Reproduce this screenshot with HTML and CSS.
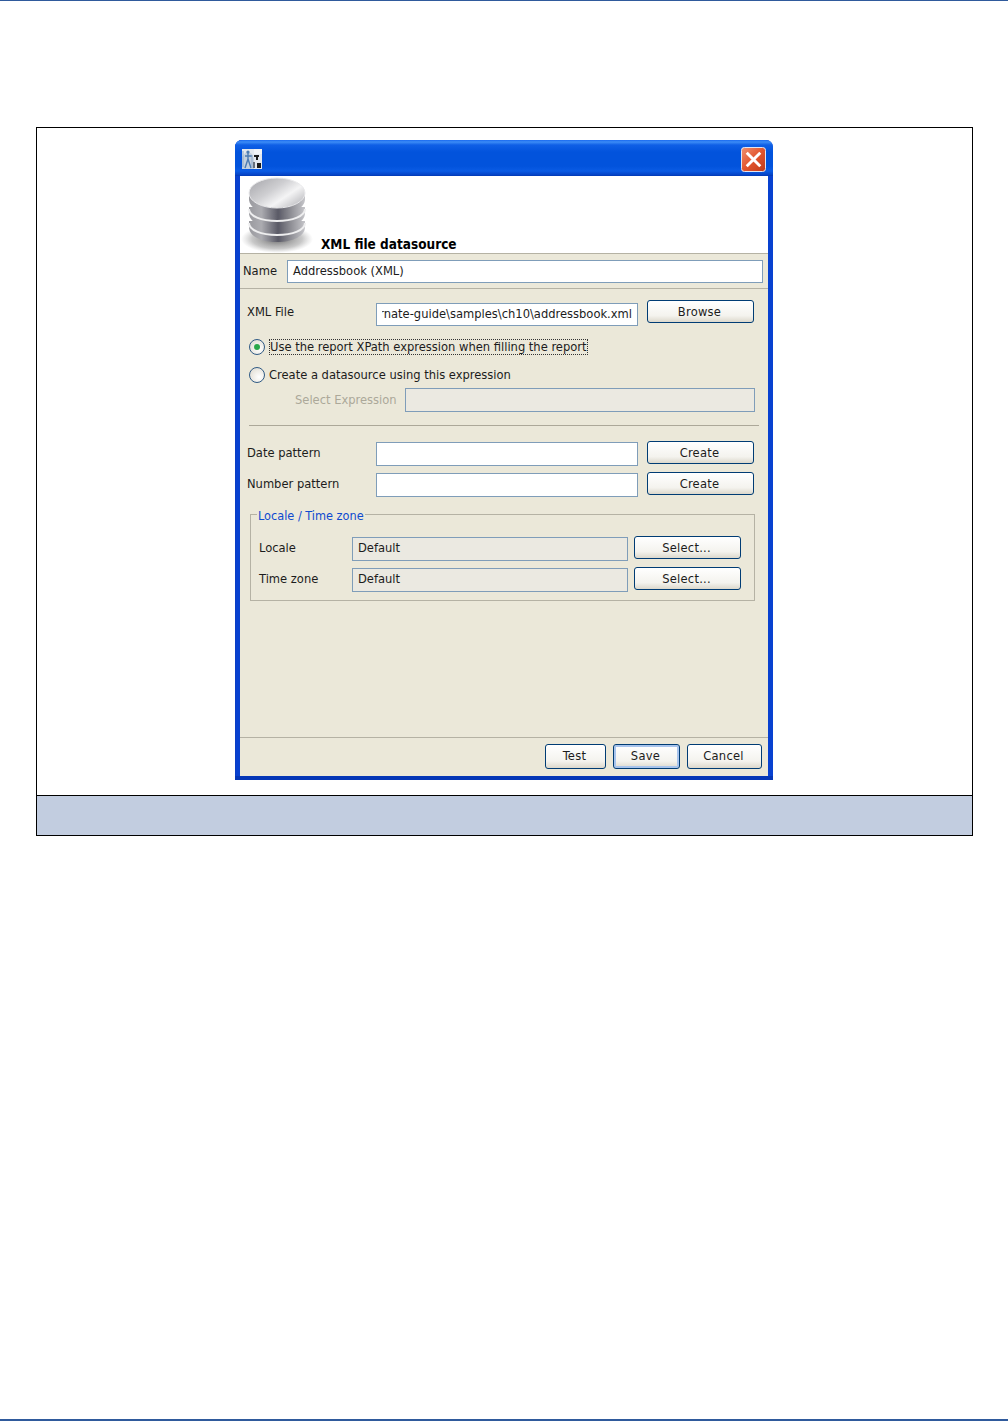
FILE: index.html
```html
<!DOCTYPE html>
<html lang="en">
<head>
<meta charset="utf-8">
<title>XML file datasource</title>
<link rel="stylesheet" href="styles.css">
</head>
<body>
<div class="page">
  <div class="rule-top"></div>
  <div class="figure">
    <div class="figure-shot">
      <div class="window">
        <div class="titlebar">
          <svg class="app-icon" width="20" height="20" viewBox="0 0 20 20">
            <defs><filter id="soft"><feGaussianBlur stdDeviation="0.350"/></filter></defs>
            <g filter="url(#soft)">
              <rect width="20" height="20" fill="#e3e8ee"/>
              <path d="M0 8l5-6 5 3 2 5v10H0z" fill="#c3d0df"/>
              <path d="M12 0h8v5h-8z" fill="#f1f3f6"/>
              <path d="M6 3v7M6 10l-3 9M6 10l3 9M3 7h7" fill="none" stroke="#4b7bb2" stroke-width="1.400"/>
              <path d="M1 2v16M10 6v13" fill="none" stroke="#8fa9c7" stroke-width="1"/>
              <circle cx="6" cy="3" r="1.600" fill="#4b7bb2"/>
              <path d="M12 6h5v2h-5zM14 8h2v3h-2zM15 14h4v5h-4z" fill="#1c1c1c"/>
              <path d="M11 13h2v6h-2z" fill="#66707c"/>
            </g>
          </svg>
          <svg class="close-icon" width="25" height="25" viewBox="0 0 26 26">
            <defs>
              <linearGradient id="closeFill" x1="0" y1="0" x2="1" y2="1">
                <stop offset="0" stop-color="#ee9272"/>
                <stop offset="0.500" stop-color="#e2552e"/>
                <stop offset="1" stop-color="#c03a18"/>
              </linearGradient>
            </defs>
            <rect x="0.500" y="0.500" width="25" height="25" rx="3" fill="url(#closeFill)" stroke="#e8eef8"/>
            <path d="M7 7l12 12M19 7L7 19" stroke="#fff" stroke-width="3" stroke-linecap="square" fill="none"/>
          </svg>
        </div>
        <div class="client">
          <div class="banner">
            <svg class="db-icon" width="76" height="76" viewBox="0 0 76 76">
              <defs>
                <linearGradient id="dbSide" x1="0" y1="0" x2="1" y2="0">
                  <stop offset="0" stop-color="#9a9a9f"/>
                  <stop offset="0.220" stop-color="#acacb1"/>
                  <stop offset="0.520" stop-color="#5a5a66"/>
                  <stop offset="0.780" stop-color="#96969c"/>
                  <stop offset="1" stop-color="#c6c6ca"/>
                </linearGradient>
                <linearGradient id="dbTop" x1="0" y1="0" x2="1" y2="0.800">
                  <stop offset="0" stop-color="#a3a3a8"/>
                  <stop offset="0.450" stop-color="#cfcfd2"/>
                  <stop offset="0.700" stop-color="#f4f4f5"/>
                  <stop offset="1" stop-color="#bcbcc0"/>
                </linearGradient>
                <radialGradient id="dbShadow">
                  <stop offset="0" stop-color="#444" stop-opacity="0.800"/>
                  <stop offset="0.700" stop-color="#777" stop-opacity="0.400"/>
                  <stop offset="1" stop-color="#999" stop-opacity="0"/>
                </radialGradient>
                <filter id="dbSoft" x="-5%" y="-5%" width="110%" height="110%"><feGaussianBlur stdDeviation="0.600"/></filter>
              </defs>
              <ellipse cx="37" cy="62" rx="36" ry="14" fill="url(#dbShadow)"/>
              <g filter="url(#dbSoft)">
                <path d="M9 44v6c0 9 12 15 28 15s28-6 28-15v-6z" fill="url(#dbSide)"/>
                <path d="M9 46c0 7 12 12 28 12s28-5 28-12" fill="none" stroke="#eeeeef" stroke-width="2"/>
                <path d="M9 30v6c0 9 12 15 28 15s28-6 28-15v-6z" fill="url(#dbSide)"/>
                <path d="M9 32c0 7 12 12 28 12s28-5 28-12" fill="none" stroke="#eeeeef" stroke-width="2"/>
                <path d="M9 17v5c0 9 12 15 28 15s28-6 28-15v-5z" fill="url(#dbSide)"/>
                <ellipse cx="37" cy="16" rx="28" ry="15" fill="url(#dbTop)" stroke="#e8e8ea"/>
              </g>
            </svg>
            <span class="banner-title">XML file datasource</span>
          </div>
          <div class="name-row">
            <span class="name-label">Name</span>
            <div class="field field-name">Addressbook (XML)</div>
          </div>
          <div class="main">
            <div class="row row-xml">
              <span class="label">XML File</span>
              <div class="field field-main field-clip"><span class="clip-window"><span class="clip-text">hibernate-guide\samples\ch10\addressbook.xml</span></span></div>
              <div class="btn btn-side btn-browse">Browse</div>
            </div>
            <div class="radio-row radio-first">
              <span class="radio"><span class="radio-dot"></span></span>
              <span class="focus-text">Use the report XPath expression when filling the report</span>
            </div>
            <div class="radio-row radio-second">
              <span class="radio"></span>
              <span class="radio-text">Create a datasource using this expression</span>
            </div>
            <div class="select-row">
              <span class="disabled-label">Select Expression</span>
              <div class="field field-disabled field-select"></div>
            </div>
            <div class="separator"></div>
            <div class="row row-date">
              <span class="label label-tall">Date pattern</span>
              <div class="field field-main field-tall"></div>
              <div class="btn btn-side">Create</div>
            </div>
            <div class="row row-number">
              <span class="label label-tall">Number pattern</span>
              <div class="field field-main field-tall"></div>
              <div class="btn btn-side">Create</div>
            </div>
            <div class="group">
              <span class="legend">Locale / Time zone</span>
              <div class="group-row">
                <span class="group-label">Locale</span>
                <div class="field field-disabled field-group">Default</div>
                <div class="btn btn-group">Select...</div>
              </div>
              <div class="group-row">
                <span class="group-label">Time zone</span>
                <div class="field field-disabled field-group">Default</div>
                <div class="btn btn-group">Select...</div>
              </div>
            </div>
          </div>
          <div class="footer">
            <div class="btn btn-test">Test</div>
            <div class="btn btn-save">Save</div>
            <div class="btn btn-cancel">Cancel</div>
          </div>
        </div>
      </div>
    </div>
    <div class="figure-caption"></div>
  </div>
  <div class="rule-bottom"></div>
</div>
</body>
</html>
```

FILE: styles.css
```css
* { box-sizing: border-box; }
html, body { margin: 0; padding: 0; background: #fff; }
body { font-family: "DejaVu Sans Condensed", "DejaVu Sans", sans-serif; font-size: 12.8px; color: #1c1c1c; }
.page { height: 1422px; display: flex; flex-direction: column; overflow: hidden; padding-bottom: 1px; }
.rule-top { height: 1px; background: #2f5a9c; flex: none; }
.rule-bottom { height: 2px; background: #2f5a9c; flex: none; margin-top: auto; }

.figure { width: 937px; margin: 126px 0 0 36px; border: 1px solid #000; flex: none; }
.figure-shot { height: 668px; padding: 12px 1px 0 0; display: flex; justify-content: center; border-bottom: 1px solid #000; }
.figure-caption { height: 39px; background: #c2cde0; }

.window { width: 538px; height: 640px; display: flex; flex-direction: column; background: #0841d0; border-radius: 7px 7px 0 0; padding: 0 5px 4px 5px; box-shadow: inset 0 -4px 0 #0436b6, inset 1px 0 0 #0a3ec4; }
.titlebar { height: 36px; flex: none; margin: 0 -5px; padding: 0 7px 0 7px; border-radius: 7px 7px 0 0; display: flex; align-items: center; justify-content: space-between;
  background: linear-gradient(#1a6af0 0, #3c8cf6 2px, #0f5fe6 5px, #0253dc 12px, #0253dc 26px, #0a5be4 31px, #0542c4 35px, #0338b0 36px); }
.app-icon { display: block; margin-top: 2px; }
.close-icon { display: block; margin-top: 3px; }
.client { flex: 1; min-height: 0; display: flex; flex-direction: column; background: #ebe8d9; }

.banner { height: 78px; flex: none; background: #fff; border-bottom: 1px solid #b5b2a4; display: flex; align-items: flex-end; }
.db-icon { display: block; flex: none; }
.banner-title { font-weight: 700; font-size: 13.5px; color: #000; margin: 0 0 1px 5px; line-height: 16px; }

.name-row { height: 35px; flex: none; display: flex; align-items: center; border-bottom: 1px solid #b5b2a4; padding: 0 5px 0 3px; }
.name-label { width: 44px; flex: none; padding-bottom: 1px; }
.field { background: #fff; border: 1px solid #7f9db9; height: 23px; line-height: 19px; padding: 0 5px; white-space: nowrap; overflow: hidden; }
.field-name { flex: 1; }

.main { flex: 1; min-height: 0; padding: 0 0 0 7px; border-bottom: 1px solid #b5b2a4; }
.row { display: flex; align-items: flex-start; height: 24px; }
.row-xml { margin-top: 12px; }
.label { width: 129px; flex: none; line-height: 22px; }
.label-tall { line-height: 24px; }
.field-main { width: 262px; flex: none; margin-top: 2px; }
.field-tall { height: 24px; margin-top: 1px; }
.clip-window { display: block; overflow: hidden; direction: rtl; }
.clip-text { direction: ltr; unicode-bidi: embed; }

.btn { border: 1px solid #003c74; border-radius: 3px; background: linear-gradient(#fff, #f4f3ee 70%, #dcd8cc); display: flex; align-items: center; justify-content: center; flex: none; height: 23px; color: #1c1c1c; letter-spacing: 0.25px; padding-right: 2px; }
.btn-side { width: 107px; margin-left: 9px; }
.btn-browse { margin-top: -1px; }

.radio-row { display: flex; align-items: center; height: 16px; padding-left: 2px; }
.radio-first { margin-top: 14px; }
.radio-second { margin-top: 12px; }
.radio { width: 16px; height: 16px; border-radius: 50%; border: 1px solid #2f5a85; background: radial-gradient(circle at 65% 65%, #fff, #dcd8cc); display: flex; align-items: center; justify-content: center; flex: none; margin-right: 4px; }
.radio-dot { width: 6px; height: 6px; border-radius: 50%; background: #2aa84a; }
.focus-text { border: 1px dotted #333; line-height: 14px; height: 16px; white-space: nowrap; }
.radio-text { line-height: 16px; }

.select-row { display: flex; align-items: center; margin-top: 5px; padding-left: 48px; }
.disabled-label { width: 110px; flex: none; color: #aca899; padding-bottom: 2px; }
.field-disabled { background: #ebe9e1; }
.field-select { width: 350px; height: 24px; flex: none; }
.separator { height: 1px; background: #aca899; width: 510px; margin: 13px 0 15px 2px; }
.row-number { margin-top: 7px; }

.group { width: 505px; height: 87px; margin: 18px 0 0 3px; border: 1px solid #b5b2a4; position: relative; padding: 21px 13px 0 8px; }
.legend { position: absolute; left: 6px; top: -7px; background: #ebe8d9; padding: 0 1px; color: #0e4ad0; line-height: 15px; white-space: nowrap; font-size: 12.6px; }
.group-row { display: flex; align-items: center; height: 24px; margin-bottom: 7px; }
.group-label { width: 93px; flex: none; padding-bottom: 2px; }
.field-group { width: 276px; flex: none; margin-top: 1px; height: 24px; }
.btn-group { width: 107px; margin-left: 6px; margin-top: -1px; }

.footer { height: 38px; flex: none; display: flex; align-items: flex-start; padding: 6px 6px 0 0; justify-content: flex-end; }
.btn-test, .btn-save, .btn-cancel { height: 25px; padding-bottom: 3px; }
.btn-test { width: 61px; margin-right: 7px; }
.btn-save { width: 67px; margin-right: 7px; box-shadow: inset 0 0 0 2px #a8c4ec; }
.btn-cancel { width: 75px; }
```
